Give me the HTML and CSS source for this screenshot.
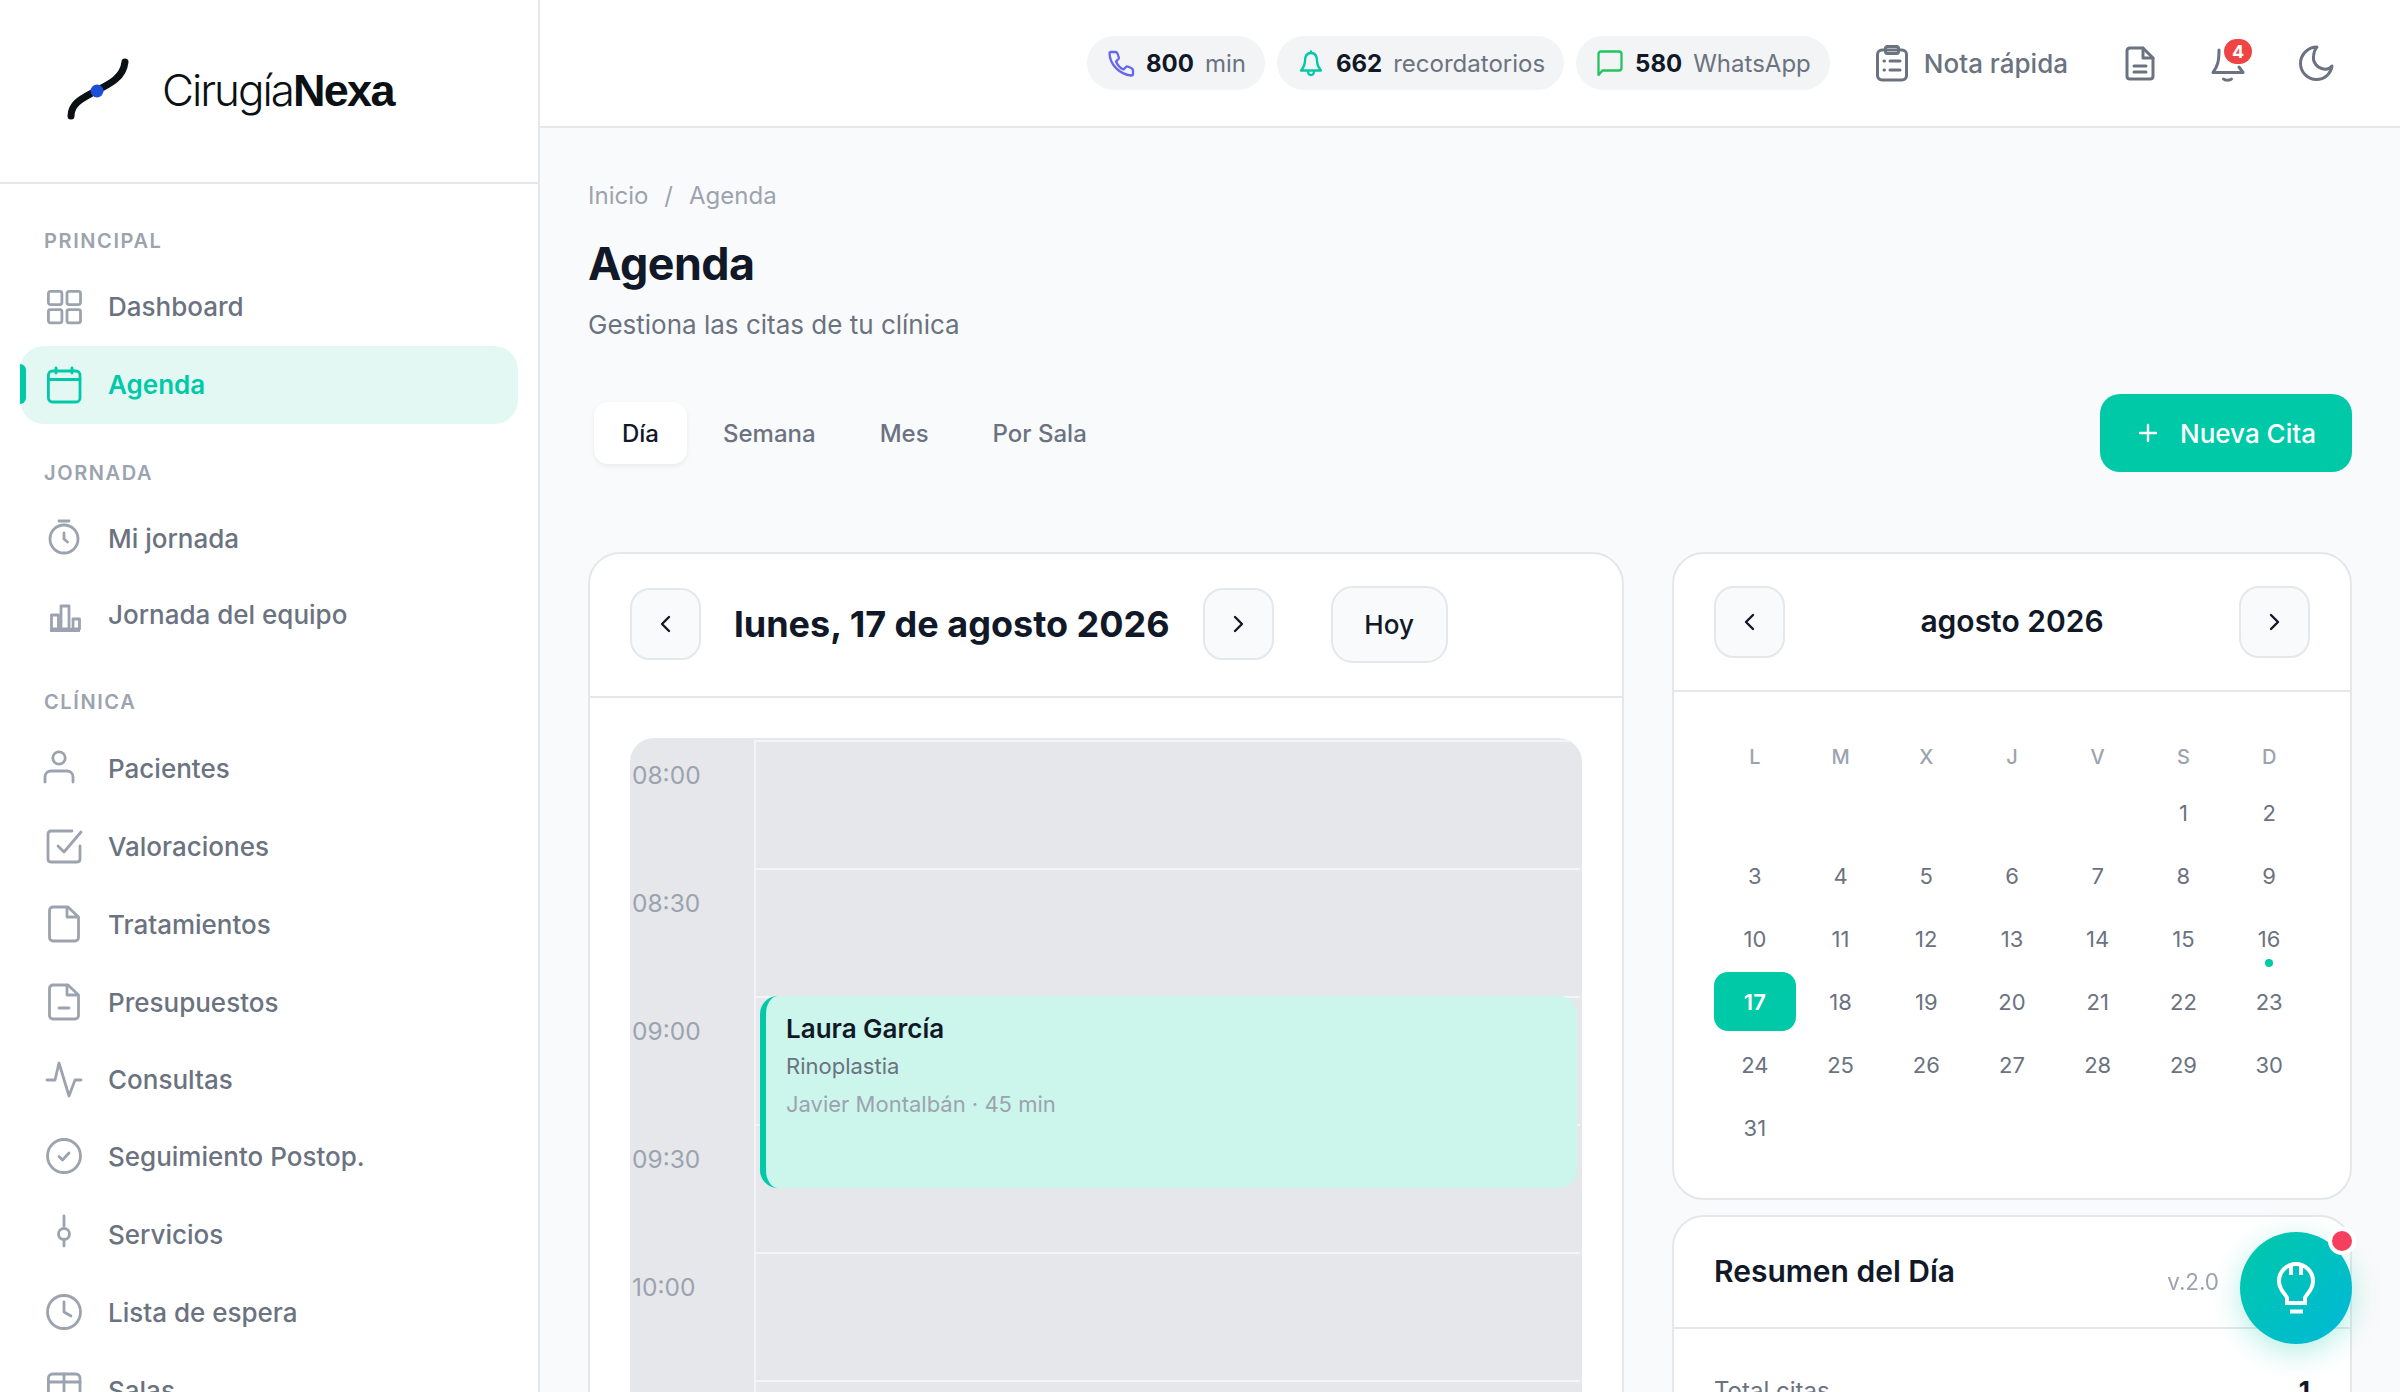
FILE: index.html
```html
<!DOCTYPE html>
<html lang="es">
<head>
<meta charset="utf-8">
<title>CirugíaNexa · Agenda</title>
<link rel="stylesheet" href="styles.css">
</head>
<body>
<div class="app">
  <aside class="sidebar">
    <div class="brand">
      <svg class="brand-mark" viewBox="0 0 64 64" width="64" height="64" fill="none"><path d="M6 58C6 46 16 41 27 35C40 28 58 22 60 4" stroke="#0b1014" stroke-width="7" stroke-linecap="round"/><circle cx="32" cy="33" r="6.5" fill="#1d4ed8"/></svg>
      <div class="brand-name">Cirugía<b>Nexa</b></div>
    </div>
    <nav class="nav">
      <div class="nav-label first">PRINCIPAL</div>
      <a class="nav-item tall"><svg class="nav-ico" viewBox="0 0 36 36"><rect x="2.4" y="2.4" width="13.5" height="13.2" rx="2"/><rect x="21" y="2.4" width="13.5" height="13.2" rx="2"/><rect x="2.4" y="20.6" width="13.5" height="13.2" rx="2"/><rect x="21" y="20.6" width="13.5" height="13.2" rx="2"/></svg><span>Dashboard</span></a>
      <a class="nav-item active"><svg class="nav-ico" viewBox="0 0 36 36"><rect x="2.4" y="4" width="31.6" height="31" rx="4"/><path d="M2.4 12.5H34M10 1V6M26 1V6"/></svg><span>Agenda</span></a>
      <div class="nav-label">JORNADA</div>
      <a class="nav-item short"><svg class="nav-ico" viewBox="0 0 36 36"><circle cx="18" cy="19" r="14"/><path d="M13 1H23M18 13V19L21.500 22"/></svg><span>Mi jornada</span></a>
      <a class="nav-item short"><svg class="nav-ico" viewBox="0 0 36 36"><path d="M4 34H34" stroke-width="4" stroke-linecap="butt"/><rect x="5.500" y="19" width="7" height="14"/><rect x="15" y="10" width="8" height="23"/><rect x="27" y="23" width="6.500" height="10"/></svg><span>Jornada del equipo</span></a>
      <div class="nav-label wide">CLÍNICA</div>
      <a class="nav-item"><svg class="nav-ico" viewBox="0 0 36 36"><circle cx="13" cy="8" r="6.2"/><path d="M-1 32V27C-1 23 2 21 5 21H21C24 21 27 23 27 27V32"/></svg><span>Pacientes</span></a>
      <a class="nav-item"><svg class="nav-ico" viewBox="0 0 36 36"><path d="M26 3H5C3 3 2 4 2 6V31C2 33 3 34 5 34H31C33 34 34 33 34 31V18"/><path d="M12 18L18 24L35 4"/></svg><span>Valoraciones</span></a>
      <a class="nav-item"><svg class="nav-ico" viewBox="0 0 36 36"><path d="M22 1H7C5 1 3.500 2.500 3.500 4.500V31.500C3.500 33.500 5 35 7 35H29C31 35 32.500 33.500 32.500 31.500V11Z"/><path d="M21 2V11H31"/></svg><span>Tratamientos</span></a>
      <a class="nav-item"><svg class="nav-ico" viewBox="0 0 36 36"><path d="M22 1H7C5 1 3.500 2.500 3.500 4.500V31.500C3.500 33.500 5 35 7 35H29C31 35 32.500 33.500 32.500 31.500V11Z"/><path d="M21 2V11H31M13 24H23"/></svg><span>Presupuestos</span></a>
      <a class="nav-item short"><svg class="nav-ico" viewBox="0 0 36 36"><path d="M1 19H9L13 2L23 35L29 19H35"/></svg><span>Consultas</span></a>
      <a class="nav-item"><svg class="nav-ico" viewBox="0 0 36 36"><circle cx="18" cy="18" r="16.500"/><path d="M13 18.500L16.500 22L23 15"/></svg><span>Seguimiento Postop.</span></a>
      <a class="nav-item"><svg class="nav-ico" viewBox="0 0 36 36"><circle cx="18" cy="18" r="5.500"/><path d="M18 0V10M18 24V30"/></svg><span>Servicios</span></a>
      <a class="nav-item"><svg class="nav-ico" viewBox="0 0 36 36"><circle cx="18" cy="18" r="16.500"/><path d="M18 8V18L25 22"/></svg><span>Lista de espera</span></a>
      <a class="nav-item"><svg class="nav-ico" viewBox="0 0 36 36"><rect x="2.400" y="2" width="31.600" height="31" rx="4"/><path d="M2.400 10H34M18 2V33"/></svg><span>Salas</span></a>
    </nav>
  </aside>

  <div class="page">
    <header class="topbar">
      <div class="pill"><svg class="pill-ico ind" viewBox="0 0 26 26"><path d="M3 2H7.500C8.500 2 9 2.500 9.500 3.500L11 8C11 9 9 10.500 8 11.500C9.500 15 12 18 15.500 19.500L18.500 16.500C19 16.300 23 18 24 18.500C24.500 19 25 19.500 25 20.500V24C25 25 24 25.500 23 25.500C12 24.500 2 15 1.500 3.500C1.500 2.500 2 2 3 2Z"/></svg><b>800</b><span>min</span></div>
      <div class="pill"><svg class="pill-ico teal" viewBox="0 0 26 26"><path d="M13 3C8.500 3 7 7 7 11C7 16 5 18 3 20.500H23C21 18 19 16 19 11C19 7 17.500 3 13 3ZM13 3V1.500M10 21C10 24 11.500 25 13 25C14.500 25 16 24 16 21"/></svg><b>662</b><span>recordatorios</span></div>
      <div class="pill"><svg class="pill-ico green" viewBox="0 0 26 26"><path d="M1.500 25V4C1.500 2.500 2.500 1.500 4 1.500H22C23.500 1.500 24.500 2.500 24.500 4V18C24.500 19.500 23.500 20.500 22 20.500H5.500Z"/></svg><b>580</b><span>WhatsApp</span></div>
      <button class="quick"><svg class="top-ico" viewBox="0 0 36 36"><rect x="3.500" y="5" width="29" height="30" rx="4.500"/><rect x="11.500" y="1.500" width="13" height="7" rx="2"/><path d="M10 16H10.500M10 25H10.500M16 16H26M16 25H26"/></svg><span>Nota rápida</span></button>
      <button class="icon-btn"><svg class="top-ico" viewBox="0 0 36 36"><path d="M21 3H8C6 3 5 4 5 6V31C5 33 6 34 8 34H28C30 34 31 33 31 31V13Z"/><path d="M21 3V13H31M12 21H24M12 27H24"/></svg></button>
      <button class="icon-btn bell"><svg class="top-ico" viewBox="0 0 36 36"><path d="M9 5C9 15 8 21 3 27.500H33L29 22M13.500 34C15 35.500 20 35.500 21.500 34"/></svg><span class="badge">4</span></button>
      <button class="icon-btn"><svg class="top-ico" viewBox="0 0 36 36"><path d="M19 2C10 2 2.500 9.500 2.500 18.500C2.500 27.500 10 34.500 18.500 34.500C26.500 34.500 33 28.500 34 21C32 23.500 28.500 24.500 25.500 24C19 23 14.500 17 15.500 11C16 7 17 4 19 2Z"/></svg></button>
    </header>

    <main class="content">
      <div class="crumbs"><span>Inicio</span><i>/</i><span>Agenda</span></div>
      <h1 class="title">Agenda</h1>
      <p class="subtitle">Gestiona las citas de tu clínica</p>

      <div class="toolbar">
        <div class="tabs">
          <a class="tab on">Día</a>
          <a class="tab">Semana</a>
          <a class="tab">Mes</a>
          <a class="tab">Por Sala</a>
        </div>
        <button class="primary"><svg viewBox="0 0 24 24" width="24" height="24"><path d="M12 4V20M4 12H20"/></svg><span>Nueva Cita</span></button>
      </div>

      <div class="columns">
        <section class="card day-card">
          <div class="day-head">
            <button class="nav-btn"><svg viewBox="0 0 24 24"><path d="M15 5L8 12L15 19"/></svg></button>
            <h2 class="day-title">lunes, 17 de agosto 2026</h2>
            <button class="nav-btn"><svg viewBox="0 0 24 24"><path d="M9 5L16 12L9 19"/></svg></button>
            <button class="today">Hoy</button>
          </div>
          <div class="day-body">
            <div class="schedule">
              <div class="slot"><div class="hour">08:00</div><div class="lane"></div></div>
              <div class="slot"><div class="hour">08:30</div><div class="lane"></div></div>
              <div class="slot"><div class="hour">09:00</div><div class="lane"><div class="appt"><strong>Laura García</strong><span class="appt-type">Rinoplastia</span><span class="appt-doc">Javier Montalbán · 45 min</span></div></div></div>
              <div class="slot"><div class="hour">09:30</div><div class="lane"></div></div>
              <div class="slot"><div class="hour">10:00</div><div class="lane"></div></div>
              <div class="slot"><div class="hour">10:30</div><div class="lane"></div></div>
            </div>
          </div>
        </section>

        <div class="side">
          <section class="card month-card">
            <div class="month-head">
              <button class="nav-btn"><svg viewBox="0 0 24 24"><path d="M15 5L8 12L15 19"/></svg></button>
              <h3 class="month-title">agosto 2026</h3>
              <button class="nav-btn"><svg viewBox="0 0 24 24"><path d="M9 5L16 12L9 19"/></svg></button>
            </div>
            <div class="month-grid">
              <div class="dow">L</div><div class="dow">M</div><div class="dow">X</div><div class="dow">J</div><div class="dow">V</div><div class="dow">S</div><div class="dow">D</div>
              <div></div><div></div><div></div><div></div><div></div><div class="d">1</div><div class="d">2</div>
              <div class="d">3</div><div class="d">4</div><div class="d">5</div><div class="d">6</div><div class="d">7</div><div class="d">8</div><div class="d">9</div>
              <div class="d">10</div><div class="d">11</div><div class="d">12</div><div class="d">13</div><div class="d">14</div><div class="d">15</div><div class="d dot">16</div>
              <div class="d sel">17</div><div class="d">18</div><div class="d">19</div><div class="d">20</div><div class="d">21</div><div class="d">22</div><div class="d">23</div>
              <div class="d">24</div><div class="d">25</div><div class="d">26</div><div class="d">27</div><div class="d">28</div><div class="d">29</div><div class="d">30</div>
              <div class="d">31</div>
            </div>
          </section>
          <section class="card summary-card">
            <h3 class="summary-title">Resumen del Día</h3>
            <div class="summary-row"><span>Total citas</span><b>1</b></div>
          </section>
        </div>
      </div>
    </main>
  </div>
</div>

<div class="assist">
  <span class="version">v.2.0</span>
  <button class="fab"><svg viewBox="0 0 56 56"><path d="M19 43H37V38C37 35 45 31 45 21A17 17 0 0 0 11 21C11 31 19 35 19 38ZM22 51.500H35M23 4V15M33 4V15"/></svg><span class="fab-dot"></span></button>
</div>
</body>
</html>
```
FILE: styles.css
```css
* { box-sizing: border-box; }
html, body { margin: 0; height: 100%; overflow: hidden; }
body { font-family: Inter, "Noto Sans", sans-serif; color: #111827; background: #f9fafb; }
button { font: inherit; cursor: pointer; }
h1, h2, h3, p { margin: 0; }

.app { display: flex; height: 1392px; }

/* Sidebar */
.sidebar { width: 540px; flex: none; background: #fff; border-right: 2px solid #e5e7eb; height: 100%; overflow: hidden; }
.brand { height: 184px; border-bottom: 2px solid #e5e7eb; display: flex; align-items: center; padding: 0 0 2px 65px; gap: 33px; }
.brand-name { font-family: Inter, sans-serif; font-weight: 300; font-size: 44px; letter-spacing: -2px; color: #0b1014; }
.brand-name b { font-family: "Liberation Sans", Arial, sans-serif; font-size: 45px; letter-spacing: -1.7px; font-weight: 700; }
.nav { padding: 38px 20px 0; }
.nav-label { height: 38px; line-height: 38px; padding-left: 24px; font-size: 20px; font-weight: 600; letter-spacing: 1.6px; color: #9ca3af; margin-top: 30px; margin-bottom: 8px; }
.nav-label.first { margin-top: 0; margin-bottom: 7px; }
.nav-label.wide { margin-top: 31px; }
.nav-item { display: flex; align-items: center; height: 78px; padding-left: 26px; gap: 26px; font-size: 26px; font-weight: 500; color: #6b7280; border-radius: 24px; position: relative; }
.nav-item.short { height: 76px; }
.nav-item.tall { height: 79px; }
.nav-ico { width: 36px; height: 36px; flex: none; fill: none; stroke: #9ca3af; stroke-width: 2.8; overflow: visible; stroke-linecap: round; stroke-linejoin: round; }
.nav-item.active { background: #e3f8f3; color: #00c9a7; font-weight: 600; }
.nav-item.active span { margin-bottom: 2px; }
.nav-item.active .nav-ico { stroke: #00c9a7; }
.nav-item.active::before { content: ""; position: absolute; left: 0; top: 18px; bottom: 20px; width: 6px; background: #00c9a7; border-radius: 0 6px 6px 0; }

/* Top bar */
.page { flex: 1; min-width: 0; height: 100%; overflow: hidden; }
.topbar { height: 128px; background: #fff; border-bottom: 2px solid #e5e7eb; display: flex; align-items: center; justify-content: flex-end; gap: 12px; padding-right: 48px; }
.pill { height: 54px; border-radius: 27px; background: #f3f4f6; display: flex; align-items: center; padding: 0 19px 0 21px; font-size: 24px; color: #6b7280; }
.pill b { color: #111827; font-weight: 700; margin-right: 11px; }
.pill-ico { width: 26px; height: 26px; margin-right: 12px; fill: none; stroke-width: 2.300; stroke-linejoin: round; stroke-linecap: round; overflow: visible; }
.ind { stroke: #6366f1; } .teal { stroke: #00c9a7; } .green { stroke: #22c55e; }
.quick { height: 64px; border: 0; background: none; display: flex; align-items: center; gap: 14px; padding: 0 20px 0 20px; margin-left: 12px; margin-right: 0; font-size: 26px; font-weight: 500; color: #6b7280; }
.icon-btn { width: 72px; height: 64px; border: 0; background: none; padding: 0; display: flex; align-items: center; justify-content: center; position: relative; margin-left: 4px; }
.top-ico { width: 36px; height: 36px; fill: none; stroke: #6b7280; stroke-width: 3; stroke-linecap: round; stroke-linejoin: round; overflow: visible; }
.badge { position: absolute; left: 32px; top: 8px; width: 28px; height: 25px; border-radius: 12.500px; background: #ef4444; color: #fff; font-size: 18px; font-weight: 700; line-height: 25px; text-align: center; }

/* Content */
.content { padding: 48px 48px 0; }
.crumbs { height: 38px; display: flex; align-items: center; gap: 16px; font-size: 24px; color: #9ca3af; }
.crumbs i { font-style: normal; }
.title { font-size: 44.800px; font-weight: 700; line-height: 56px; margin-top: 22px; letter-spacing: -0.5px; }
.subtitle { font-size: 26px; line-height: 40px; color: #6b7280; margin-top: 13px; }
.toolbar { display: flex; justify-content: space-between; align-items: center; margin-top: 49px; height: 78px; }
.tabs { display: flex; gap: 8px; padding-left: 6px; }
.tab { height: 62px; padding: 0 28px; display: flex; align-items: center; font-size: 24px; font-weight: 500; color: #6b7280; border-radius: 14px; }
.tab.on { background: #fff; color: #111827; box-shadow: 0 2px 5px rgba(17, 24, 39, .07); }
.primary { height: 78px; width: 252px; border: 0; border-radius: 20px; background: #00c9a7; color: #fff; display: flex; align-items: center; justify-content: center; gap: 20px; font-size: 26px; font-weight: 500; }
.primary svg { fill: none; stroke: #fff; stroke-width: 2.400; stroke-linecap: round; }

.columns { display: grid; grid-template-columns: 1036px 680px; gap: 48px; margin-top: 80px; align-items: start; }
.card { background: #fff; border: 2px solid #e5e7eb; border-radius: 32px; overflow: hidden; }

/* Day */
.day-head { height: 144px; border-bottom: 2px solid #e5e7eb; display: flex; align-items: center; padding: 0 40px 2px; }
.nav-btn { width: 71px; height: 72px; flex: none; border: 2px solid #e5e7eb; border-radius: 20px; background: #f9fafb; padding: 0; display: flex; align-items: center; justify-content: center; }
.nav-btn svg { width: 24px; height: 24px; fill: none; stroke: #111827; stroke-width: 2.400; stroke-linecap: round; stroke-linejoin: round; }
.day-title { font-size: 36px; font-weight: 700; margin: 0 33px; white-space: nowrap; }
.today { width: 117px; height: 77px; margin-left: 57px; border: 2px solid #e5e7eb; border-radius: 22px; background: #f9fafb; font-size: 26px; font-weight: 500; color: #111827; }
.day-body { padding: 40px 40px 0; }
.schedule { background: #e5e7eb; border-radius: 24px; overflow: hidden; padding-top: 2px; }
.slot { display: flex; height: 128px; }
.hour { width: 124px; flex: none; padding: 20px 0 0 2px; font-size: 24.500px; line-height: 30px; color: #9ca3af; }
.lane { flex: 1; position: relative; border-left: 2px solid #f3f4f6; border-top: 2px solid #f3f4f6; margin-right: 2px; }
.appt { position: absolute; left: 4px; right: 3px; top: -2px; height: 192px; z-index: 1; background: #ccf5ec; border-left: 6px solid #00c9a7; border-radius: 18px; padding: 16px 0 0 20px; display: flex; flex-direction: column; }
.appt strong { font-size: 26px; line-height: 34px; font-weight: 600; color: #111827; }
.appt-type { font-size: 22px; line-height: 30px; margin-top: 5px; color: #6b7280; }
.appt-doc { font-size: 22px; line-height: 30px; margin-top: 8px; color: #9ca3af; }

/* Month */
.side { display: flex; flex-direction: column; gap: 15px; }
.month-head { height: 138px; border-bottom: 2px solid #e5e7eb; display: flex; align-items: center; justify-content: space-between; padding: 0 40px; }
.month-title { font-size: 30px; font-weight: 600; margin-bottom: 2px; }
.month-grid { display: grid; grid-template-columns: repeat(7, 1fr); grid-auto-rows: 59px; gap: 4px; padding: 28px 40px 41px; }
.dow { height: 46px; line-height: 46px; text-align: center; font-size: 20px; font-weight: 500; color: #9ca3af; align-self: end; margin-bottom: -1px; }
.d { display: flex; align-items: center; justify-content: center; font-size: 22px; color: #6b7280; border-radius: 14px; position: relative; }
.d.sel { background: #00c9a7; color: #fff; font-weight: 600; }
.d.dot::after { content: ""; position: absolute; left: 50%; margin-left: -4px; bottom: 1px; width: 8px; height: 8px; border-radius: 50%; background: #00c9a7; }

/* Summary */
.summary-title { height: 112px; line-height: 108px; padding-left: 40px; border-bottom: 2px solid #e5e7eb; font-size: 30px; font-weight: 600; }
.summary-row { display: flex; justify-content: space-between; align-items: center; padding: 46px 40px 40px; font-size: 24px; color: #6b7280; }
.summary-row b { color: #111827; font-size: 26px; }

/* Assistant floating button */
.assist { position: fixed; right: 48px; bottom: 48px; display: flex; align-items: center; gap: 21px; }
.version { font-size: 22.400px; color: #9ca3af; margin-bottom: 14px; }
.fab { width: 112px; height: 112px; border: 0; border-radius: 50%; padding: 0; background: linear-gradient(135deg, #00c9a7, #00b8d9); box-shadow: 0 8px 30px rgba(0, 201, 167, .3); display: flex; align-items: center; justify-content: center; position: relative; }
.fab svg { fill: none; stroke: #fff; stroke-width: 4; width: 56px; height: 56px; }
.fab-dot { position: absolute; right: -4px; top: -5px; width: 28px; height: 28px; border-radius: 50%; background: #f43f5e; border: 4px solid #fff; }
```
